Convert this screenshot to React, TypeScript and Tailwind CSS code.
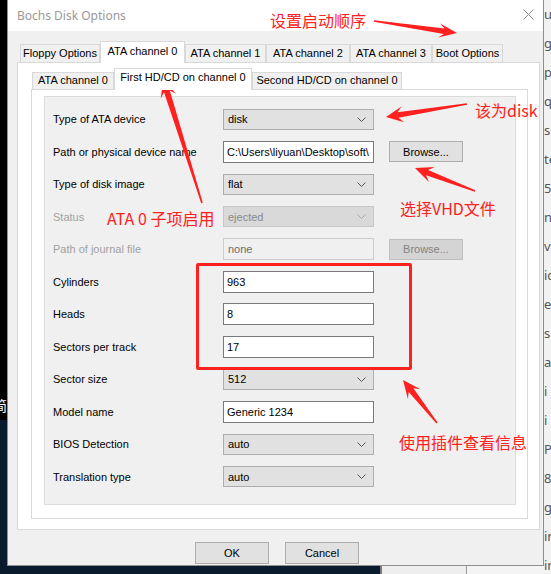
import React from "react";

type Row = {
  label: string;
  kind: "select" | "input";
  value: string;
  disabled?: boolean;
  browse?: "on" | "off";
};

const rows: Row[] = [
  { label: "Type of ATA device", kind: "select", value: "disk" },
  { label: "Path or physical device name", kind: "input", value: "C:\\Users\\liyuan\\Desktop\\soft\\", browse: "on" },
  { label: "Type of disk image", kind: "select", value: "flat" },
  { label: "Status", kind: "select", value: "ejected", disabled: true },
  { label: "Path of journal file", kind: "input", value: "none", disabled: true, browse: "off" },
  { label: "Cylinders", kind: "input", value: "963" },
  { label: "Heads", kind: "input", value: "8" },
  { label: "Sectors per track", kind: "input", value: "17" },
  { label: "Sector size", kind: "select", value: "512" },
  { label: "Model name", kind: "input", value: "Generic 1234" },
  { label: "BIOS Detection", kind: "select", value: "auto" },
  { label: "Translation type", kind: "select", value: "auto" },
];

function Chevron({ color }: { color: string }) {
  return (
    <svg width="9" height="5" viewBox="0 0 9 5" className="shrink-0">
      <polyline points="0.5,0.5 4.5,4.5 8.5,0.5" fill="none" stroke={color} strokeWidth="1" />
    </svg>
  );
}

function Control({ row }: { row: Row }) {
  if (row.kind === "select") {
    return row.disabled ? (
      <div className="flex h-[21px] w-[151px] shrink-0 items-center justify-between border border-[#c6c6c6] bg-[#d9d9d9] pl-[4px] pr-[7px] text-[#8a8a8a]">
        <span>{row.value}</span>
        <Chevron color="#a8a8a8" />
      </div>
    ) : (
      <div className="flex h-[21px] w-[151px] shrink-0 items-center justify-between border border-[#adadad] bg-[#e1e1e1] pl-[4px] pr-[7px]">
        <span>{row.value}</span>
        <Chevron color="#555555" />
      </div>
    );
  }
  return row.disabled ? (
    <div className="flex h-[22px] w-[151px] shrink-0 items-center overflow-hidden whitespace-nowrap border border-[#cccccc] bg-[#f0f0f0] pl-[4px] text-[#6d6d6d]">
      {row.value}
    </div>
  ) : (
    <div className="flex h-[22px] w-[151px] shrink-0 items-center overflow-hidden whitespace-nowrap border border-[#7a7a7a] bg-white pl-[3px]">
      {row.value}
    </div>
  );
}

function TopTab({ label, w, selected }: { label: string; w: number; selected?: boolean }) {
  return selected ? (
    <div
      className="relative z-10 -mb-px flex h-[22px] items-center justify-center border border-b-0 border-[#d9d9d9] bg-white pb-[3px]"
      style={{ width: w }}
    >
      {label}
    </div>
  ) : (
    <div
      className="flex h-[18px] items-center justify-center border border-b-0 border-[#d9d9d9] bg-[#f0f0f0]"
      style={{ width: w }}
    >
      {label}
    </div>
  );
}

function InnerTab({ label, w, selected }: { label: string; w: number; selected?: boolean }) {
  return selected ? (
    <div
      className="relative z-10 -mb-px flex h-[22px] items-center justify-center border border-b-0 border-[#d9d9d9] bg-white pb-[4px]"
      style={{ width: w }}
    >
      {label}
    </div>
  ) : (
    <div
      className="flex h-[17px] items-center justify-center border border-b-0 border-[#d9d9d9] bg-[#f0f0f0] pb-[1px]"
      style={{ width: w }}
    >
      {label}
    </div>
  );
}

function arrowPoints(tx: number, ty: number, px: number, py: number, L = 18, H = 8, w0 = 0.7, w1 = 3) {
  const dx = px - tx;
  const dy = py - ty;
  const d = Math.hypot(dx, dy);
  const ux = dx / d;
  const uy = dy / d;
  const nx = -uy;
  const ny = ux;
  const bx = px - ux * L;
  const by = py - uy * L;
  const kx = px - ux * L * 0.72;
  const ky = py - uy * L * 0.72;
  const pts = [
    [tx + nx * w0, ty + ny * w0],
    [kx + nx * w1, ky + ny * w1],
    [bx + nx * H, by + ny * H],
    [px, py],
    [bx - nx * H, by - ny * H],
    [kx - nx * w1, ky - ny * w1],
    [tx - nx * w0, ty - ny * w0],
  ];
  return pts.map((p) => `${p[0].toFixed(1)},${p[1].toFixed(1)}`).join(" ");
}

const sideText = ["u", "ga", "pl", "qu", "si", "te", "51", "n", "v", "ic", "et", "s", "as", "i", "i", "P", "8", "ge", "in", "in"];

export default function App() {
  return (
    <div className="relative flex h-[574px] w-[551px] overflow-hidden bg-[#0b1b2e] font-['Liberation_Sans',Arial,sans-serif] text-[11px] text-black">
      {/* left desktop strip */}
      <div className="flex w-[7px] shrink-0 flex-col">
        <div className="relative h-[420px] overflow-hidden bg-black">
          <span className="absolute left-[-7px] top-[398px] font-['Noto_Sans_CJK_SC',sans-serif] text-[14px] leading-none text-white">
            简
          </span>
        </div>
        <div className="flex-1 bg-[#0b1b2e]" />
      </div>

      {/* window column */}
      <div className="flex w-[537px] shrink-0 flex-col">
        <div className="flex h-[566px] flex-col border border-t-0 border-[#8f8f8f] bg-[#f0f0f0]">
          {/* title bar */}
          <div className="flex h-[31px] shrink-0 items-center justify-between bg-white pl-[9px] pr-[9px]">
            <span className="font-['Noto_Sans',sans-serif] text-[12px] text-[#999999]">Bochs Disk Options</span>
            <svg width="11" height="11" viewBox="0 0 11 11" className="mb-[2px]">
              <line x1="0.5" y1="0.5" x2="10.5" y2="10.5" stroke="#8a8a8a" strokeWidth="1" />
              <line x1="10.5" y1="0.5" x2="0.5" y2="10.5" stroke="#8a8a8a" strokeWidth="1" />
            </svg>
          </div>

          {/* body */}
          <div className="flex flex-1 flex-col pl-[9px] pr-[3px] pt-[10px]">
            <div className="flex h-[21px] items-end pl-[3px]">
              <TopTab label="Floppy Options" w={80} />
              <TopTab label="ATA channel 0" w={85} selected />
              <TopTab label="ATA channel 1" w={81} />
              <TopTab label="ATA channel 2" w={84} />
              <TopTab label="ATA channel 3" w={82} />
              <TopTab label="Boot Options" w={71} />
            </div>

            {/* outer panel */}
            <div className="flex h-[468px] w-[523px] flex-col border border-[#d9d9d9] bg-white pl-[13px] pr-[11px] pt-[4px]">
              <div className="flex h-[22px] items-end pl-[1px]">
                <InnerTab label="ATA channel 0" w={82} />
                <InnerTab label="First HD/CD on channel 0" w={138} selected />
                <InnerTab label="Second HD/CD on channel 0" w={150} />
              </div>

              {/* inner panel */}
              <div className="h-[430px] w-[497px] border border-[#d9d9d9] bg-white pl-[12px] pt-[6px]">
                {/* group */}
                <div className="h-[409px] w-[472px] border border-[#dcdcdc] bg-[#f0f0f0] pl-[8px] pt-[6px]">
                  {rows.map((r) => (
                    <div key={r.label} className="flex h-[32.5px] items-center">
                      <span className={`w-[170px] shrink-0 ${r.disabled ? "text-[#a0a0a0]" : ""}`}>{r.label}</span>
                      <Control row={r} />
                      {r.browse === "on" && (
                        <div className="ml-[15px] flex h-[21px] w-[74px] items-center justify-center border border-[#adadad] bg-[#e1e1e1]">
                          Browse...
                        </div>
                      )}
                      {r.browse === "off" && (
                        <div className="ml-[15px] flex h-[21px] w-[74px] items-center justify-center border border-[#bfbfbf] bg-[#d4d4d4] text-[#838383]">
                          Browse...
                        </div>
                      )}
                    </div>
                  ))}
                </div>
              </div>
            </div>

            {/* buttons */}
            <div className="mt-[12px] flex gap-[16px] pl-[178px]">
              <div className="flex h-[22px] w-[74px] items-center justify-center border border-[#adadad] bg-[#e1e1e1]">OK</div>
              <div className="flex h-[22px] w-[74px] items-center justify-center border border-[#adadad] bg-[#e1e1e1]">Cancel</div>
            </div>
          </div>
        </div>
        {/* under window strip */}
        <div className="flex flex-1">
          <div className="w-[373px] bg-[#0b1b2e]" />
          <div className="w-[2px] bg-[#7a7a7a]" />
          <div className="w-[84px] bg-[#eeeeee]" />
          <div className="w-px bg-[#9a9a9a]" />
          <div className="flex-1 bg-[#f4f4f4]" />
        </div>
      </div>

      {/* right background strip */}
      <div className="flex w-[7px] shrink-0 flex-col overflow-hidden bg-[#f2f2f2] font-['Noto_Sans',sans-serif] text-[13px] leading-none text-[#555]">
        {sideText.map((t, i) => (
          <div key={i} className="flex h-[29px] shrink-0 items-center whitespace-nowrap">
            {t}
          </div>
        ))}
      </div>

      {/* annotations overlay */}
      <div className="pointer-events-none absolute left-[196px] top-[263px] h-[107px] w-[216px] rounded-[2px] border-[3px] border-[#ff2020]" />
      <svg className="pointer-events-none absolute left-0 top-0" width="551" height="574" viewBox="0 0 551 574">
        <polygon points={arrowPoints(374, 21, 457, 33, 18, 7, 0.7, 2.8)} fill="#ff2020" />
        <polygon points={arrowPoints(467, 104, 386, 117, 17, 8, 0.7, 2.8)} fill="#ff2020" />
        <polygon points={arrowPoints(475, 191, 415, 168, 18, 8, 0.7, 2.8)} fill="#ff2020" />
        <polygon points={arrowPoints(202, 203, 163, 79, 18, 8, 0.8, 3)} fill="#ff2020" />
        <polygon points={arrowPoints(437, 423, 403, 380, 18, 8, 0.8, 3)} fill="#ff2020" />
      </svg>
      <div className="pointer-events-none absolute inset-0 font-['Noto_Sans_CJK_SC',sans-serif] text-[16px] leading-none text-[#ff2020]">
        <span className="absolute left-[270px] top-[12px] whitespace-nowrap">设置启动顺序</span>
        <span className="absolute left-[475px] top-[102px] whitespace-nowrap">该为disk</span>
        <span className="absolute left-[400px] top-[200px] whitespace-nowrap">选择VHD文件</span>
        <span className="absolute left-[107px] top-[210px] whitespace-nowrap">ATA 0 子项启用</span>
        <span className="absolute left-[399px] top-[434px] whitespace-nowrap">使用插件查看信息</span>
      </div>
    </div>
  );
}
